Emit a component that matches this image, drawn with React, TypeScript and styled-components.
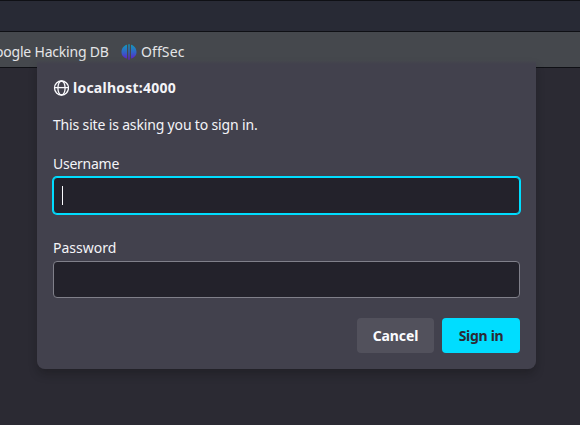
import React from 'react';
import styled, { createGlobalStyle } from 'styled-components';

const GlobalStyle = createGlobalStyle`
  * { box-sizing: border-box; }
  body { margin: 0; background: #2b2a33; overflow: hidden; }
`;
const Browser = styled.div`
  position: relative;
  display: flex;
  flex-direction: column;
  width: 580px;
  height: 425px;
  overflow: hidden;
  background: #2b2a33;
  color: #f4f4f8;
  font: 14px/20px "Noto Sans", sans-serif;
  letter-spacing: -0.16px;
  white-space: nowrap;
`;
const TabStrip = styled.div`
  height: 32px;
  background: #282a35;
  border-top: 1px solid #0f1015;
  border-bottom: 1px solid #0f1015;
`;
const BookmarksBar = styled.nav`
  display: flex;
  align-items: center;
  height: 36px;
  padding-top: 4px;
  background: #45484d;
  border-bottom: 1px solid #0f1015;
  color: #e4e5e7;
`;
const Bookmark = styled.span<{ $shift?: number; $width: number; $spacing: number }>`
  display: flex;
  align-items: center;
  gap: 4px;
  width: ${p => p.$width}px;
  margin-left: ${p => p.$shift ?? 0}px;
  letter-spacing: ${p => p.$spacing}px;
  flex: none;
`;
const Dialog = styled.form`
  position: absolute;
  left: 37px;
  top: 60px;
  width: 499px;
  height: 309px;
  display: flex;
  flex-direction: column;
  padding: 18px 16px 16px;
  border-radius: 0 0 8px 8px;
  background: linear-gradient(rgba(66, 65, 77, 0), #42414d 4px);
  box-shadow: 0 6px 10px -1px rgba(12, 12, 13, 0.3);
`;
const Origin = styled.div`
  display: flex;
  align-items: center;
  gap: 4px;
  height: 20px;
  font-weight: 700;
`;
const Host = styled.span`
  letter-spacing: 0.24px;
`;
const Message = styled.p`
  margin: 17px 0 0;
  height: 20px;
`;
const Field = styled.label<{ $gap: number; $spacing?: number }>`
  display: flex;
  flex-direction: column;
  gap: 3px;
  margin-top: ${p => p.$gap}px;
  letter-spacing: ${p => p.$spacing ?? 0}px;
`;
const Input = styled.span<{ $focused?: boolean }>`
  display: flex;
  align-items: center;
  height: 37px;
  padding-left: 8px;
  background: #23222b;
  border: 1px solid ${p => (p.$focused ? '#00ddff' : '#80808a')};
  border-radius: 4px;
  box-shadow: ${p => (p.$focused ? '0 0 0 1px #00ddff' : 'none')};
`;
const Caret = styled.i`
  width: 1px;
  height: 19px;
  background: #fbfbfe;
`;
const Actions = styled.div`
  display: flex;
  justify-content: flex-end;
  gap: 8px;
  margin-top: 20px;
`;
const Button = styled.button<{ $primary?: boolean }>`
  width: ${p => (p.$primary ? 78 : 77)}px;
  height: 35px;
  padding: 0;
  border: 0;
  border-radius: 4px;
  font: 700 14px/20px "Noto Sans", sans-serif;
  letter-spacing: ${p => (p.$primary ? -0.3 : -0.1)}px;
  background: ${p => (p.$primary ? '#00ddff' : '#52515c')};
  color: ${p => (p.$primary ? '#2b2a33' : '#fbfbfe')};
`;

const GlobeIcon = () => (
  <svg width="16" height="16" viewBox="0 0 16 16" fill="none" stroke="#fbfbfe" strokeWidth="1.3">
    <circle cx="8.5" cy="8" r="7" />
    <ellipse cx="8.5" cy="8" rx="3.6" ry="7" />
    <path d="M1.5 7.6h14" />
  </svg>
);

const OffSecIcon = () => (
  <svg width="16" height="16" viewBox="0 0 16 16">
    <defs>
      <linearGradient id="offsec" x1="0" y1="0" x2="0" y2="16" gradientUnits="userSpaceOnUse">
        <stop stopColor="#129cb8" />
        <stop offset=".5" stopColor="#3065c8" />
        <stop offset="1" stopColor="#6518c8" />
      </linearGradient>
    </defs>
    <path fill="url(#offsec)" d="M6 .8v13.7C2.8 14 .5 11.4.5 8S2.8 1.5 6 .8ZM7.3.3h1.4v15.4H7.3ZM10 .8c3.2.7 5.5 3.8 5.5 7.2s-2.3 6-5.5 6.5Z" />
  </svg>
);

export default function App() {
  return (
    <Browser>
      <GlobalStyle />
      <TabStrip />
      <BookmarksBar>
        <Bookmark $shift={-15} $width={136} $spacing={-0.2}>Google Hacking DB</Bookmark>
        <Bookmark $width={80} $spacing={0.1}><OffSecIcon />OffSec</Bookmark>
      </BookmarksBar>
      <Dialog>
        <Origin><GlobeIcon /><Host>localhost:4000</Host></Origin>
        <Message>This site is asking you to sign in.</Message>
        <Field $gap={19} $spacing={-0.25}>Username<Input $focused><Caret /></Input></Field>
        <Field $gap={24}>Password<Input /></Field>
        <Actions>
          <Button type="button">Cancel</Button>
          <Button type="button" $primary>Sign in</Button>
        </Actions>
      </Dialog>
    </Browser>
  );
}
